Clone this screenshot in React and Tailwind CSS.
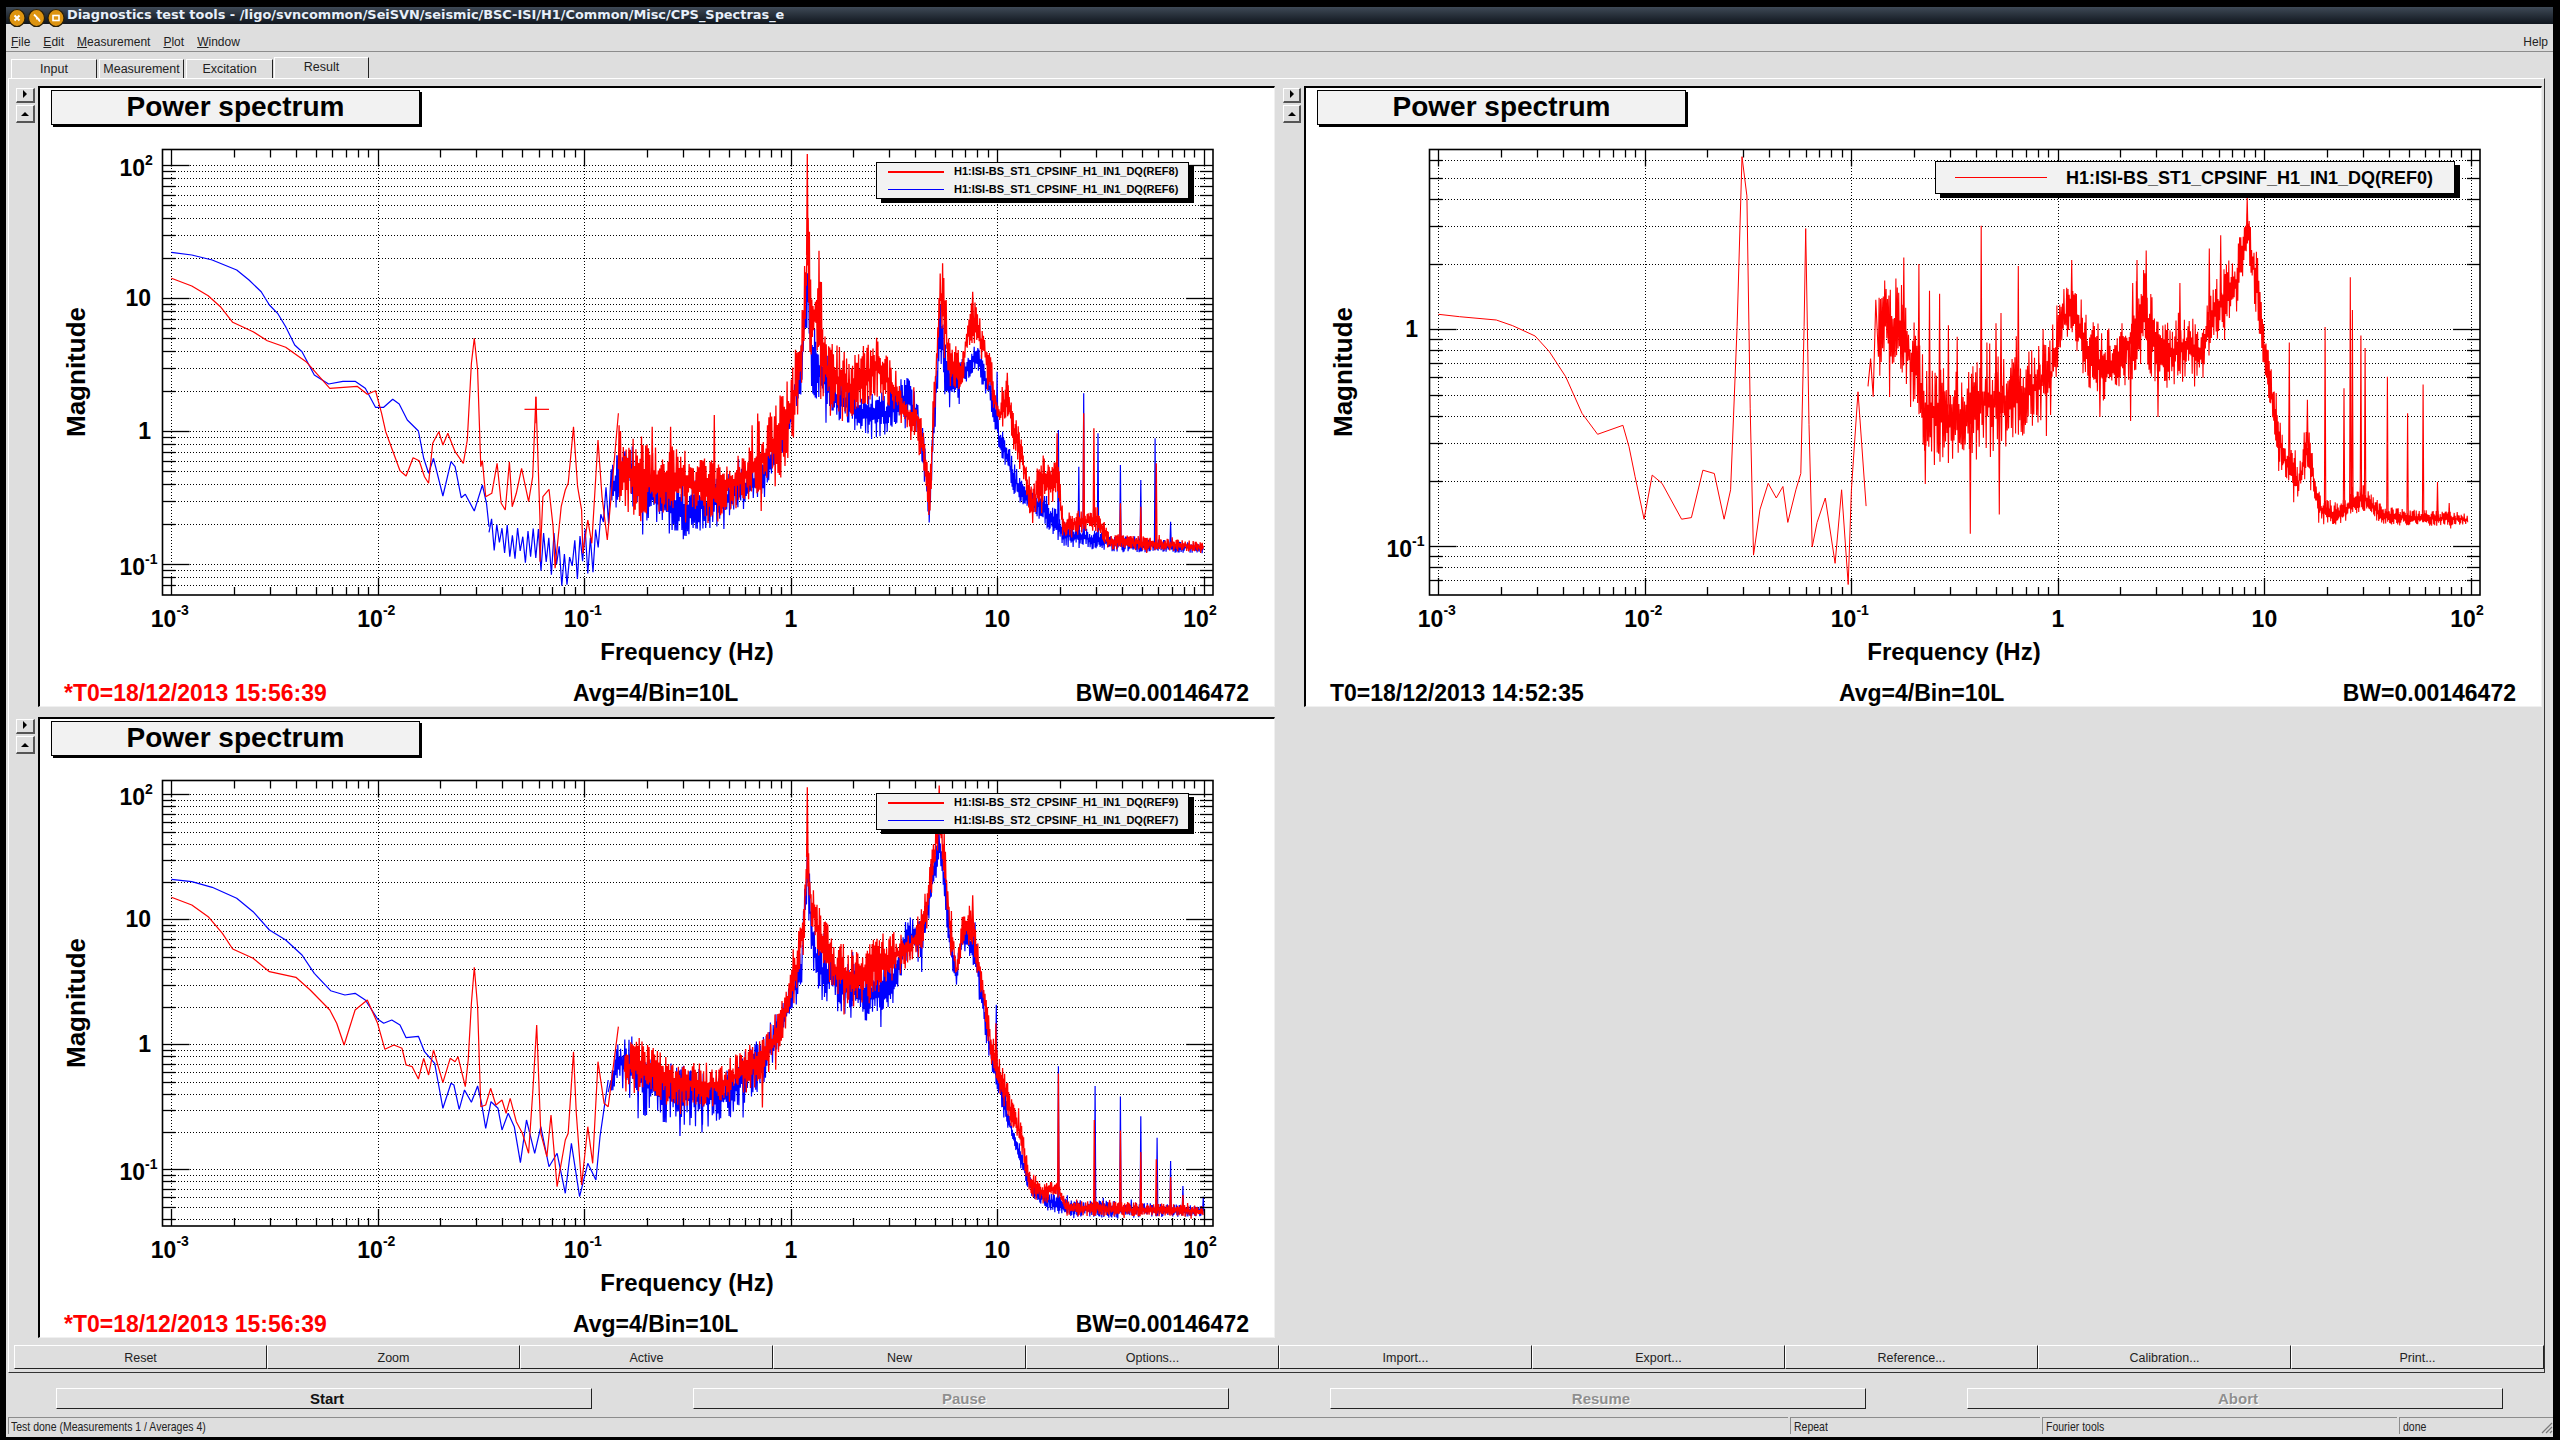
const RED = "#ff0000";
const BLUE = "#0000ff";

// zoom crop units -> page pixels
const conv = (ox, sx, oy, sy) => ([a, b]) => [ox + a / sx, oy + b / sy];
const z3 = conv(0, 2.45, 130, 3);
const z4 = conv(640, 2.45, 130, 3);
const z7 = conv(1280, 2.45, 80, 3);
const z8 = conv(1900, 2.376, 130, 2.613);
const z9 = conv(0, 2.45, 780, 3);
const z10 = conv(640, 2.45, 780, 2.795);
const main = conv(0, 0.6125, 0, 0.6125);

const trace = (pts, c) =>
  "M" + pts.map((p) => c(p).map((v) => v.toFixed(1)).join(" ")).join("L");

const makeRng = (s) => () => (s = (s * 16807) % 2147483647) / 2147483647;

// noisy spectrum: zig-zag between the top and bottom of an envelope, then spikes
const band = (env, c, seed, spikes = [], left = 0) => {
  const rnd = makeRng(seed);
  const rows = env.map(([d, t, b]) => {
    const [x, top] = c([d, t]);
    return [x, top, c([d, b])[1]];
  });
  const at = (x) => {
    let i = 0;
    while (i < rows.length - 2 && rows[i + 1][0] < x) i++;
    const [x0, t0, b0] = rows[i];
    const [x1, t1, b1] = rows[i + 1];
    const k = Math.min(1, Math.max(0, (x - x0) / (x1 - x0)));
    return [t0 + (t1 - t0) * k, b0 + (b1 - b0) * k];
  };
  let d = "";
  let x = rows[0][0];
  let sign = 1;
  const end = rows[rows.length - 1][0];
  while (x <= end) {
    const [t, b] = at(x);
    let mag = 0.08 + 0.92 * rnd();
    if (rnd() < 0.06) mag *= 1.5;
    const y = (t + b) / 2 + (sign * (b - t) * mag) / 2;
    d += (d ? "L" : "M") + x.toFixed(1) + " " + y.toFixed(1);
    sign = -sign;
    const rel = x - left;
    x += rel < 610 ? 2.6 : rel < 800 ? 0.7 : rel < 1000 ? 0.6 : 0.5;
  }
  spikes.forEach(([sx, sy]) => {
    const [px, py] = c([sx, sy]);
    const [t, b] = at(px);
    d += `M${(px - 0.7).toFixed(1)} ${((t + b) / 2).toFixed(1)}L${px.toFixed(1)} ${py.toFixed(1)}L${(px + 0.7).toFixed(1)} ${((t + b) / 2).toFixed(1)}`;
  });
  return d;
};

const chart1 = [
  {
    color: BLUE,
    width: 1.2,
    d: trace(
      [[420,367],[470,375],[520,390],[580,420],[610,450],[640,485],[660,525],[680,550],[700,590],[722,645],[740,665],[770,735],[805,762],[840,754],[870,754],[895,775],[920,832],[940,832],[962,808],[978,822],[998,870],[1025,903],[1038,985],[1050,1030],[1062,985],[1085,1098],[1105,995],[1115,1010],[1130,1103],[1140,1093],[1162,1143],[1182,1065],[1192,1120],[1198,1190]],
      z3
    ),
  },
  {
    color: BLUE,
    width: 1.2,
    d: band(
      [[-370,1140,1260],[-340,1180,1280],[-268,1170,1320],[-173,1230,1380],[-138,1200,1330],[-108,1180,1340],[-88,1060,1200],[-58,950,1150],[-28,930,1050],[0,990,1180],[50,1050,1180],[100,1050,1230],[200,1040,1190],[300,980,1090],[350,870,970],[395,650,800],[410,330,580],[420,550,800],[440,620,810],[480,720,880],[560,790,930],[600,780,920],[655,730,880],[680,800,900],[700,950,1100],[710,1050,1200],[725,700,850],[735,510,700],[760,700,850],[800,680,760],[825,640,720],[860,740,840],[880,880,960],[920,1000,1110],[940,1060,1130],[1000,1100,1200],[1040,1170,1250],[1150,1215,1265],[1380,1240,1270]],
      z4, 4711,
      [[1025,900],[875,725],[1177,1005],[1227,1050],[1262,925],[1122,910],[1075,1010],[1087,790],[1300,1175]]
    ),
  },
  {
    color: RED,
    width: 1.2,
    d: trace(
      [[420,445],[470,468],[510,497],[540,530],[570,577],[620,605],[655,632],[700,652],[750,695],[808,775],[875,769],[900,793],[920,782],[935,850],[945,905],[980,1022],[995,1038],[1012,983],[1027,992],[1040,1040],[1050,1060],[1060,940],[1075,905],[1085,945],[1097,910],[1115,965],[1135,1000],[1145,930],[1155,700],[1162,625],[1170,720],[1178,1010],[1182,992],[1190,1100],[1205,1090],[1218,1000],[1228,1120],[1238,1140],[1248,995],[1255,1130],[1265,1090],[1278,1015],[1295,1115],[1305,1040],[1313,800],[1323,1170],[1323,1295],[1330,1100],[1345,1078],[1355,1190],[1360,1315],[1375,1130],[1385,1080],[1392,1060],[1405,890],[1415,1070],[1425,1140],[1428,1270],[1440,1170],[1450,1240],[1465,930],[1475,1100],[1488,1230],[1515,850]],
      z3
    ),
  },
  {
    color: RED,
    width: 1.2,
    d: "M" + z3([1285, 838]).join(" ") + "L" + z3([1345, 838]).join(" "),
  },
  {
    color: RED,
    width: 1.3,
    d: band(
      [[-53,880,1120],[0,940,1180],[100,950,1150],[180,990,1190],[250,960,1130],[300,880,1100],[350,750,1050],[372,700,950],[395,560,800],[410,250,500],[420,360,800],[435,380,700],[450,600,830],[480,620,870],[520,680,880],[575,610,800],[620,700,840],[650,800,900],[680,800,930],[700,950,1060],[710,1030,1190],[718,800,1000],[725,650,780],[735,385,560],[745,430,700],[760,650,780],[790,650,780],[800,580,680],[815,490,640],[840,590,700],[860,680,800],[880,830,900],[900,730,880],[915,830,960],[940,950,1060],[960,1080,1190],[980,960,1130],[1000,1000,1130],[1025,990,1100],[1035,1150,1220],[1120,1130,1210],[1150,1210,1260],[1380,1235,1265]],
      z4, 9137,
      [[410,72],[182,855],[75,890],[30,890],[815,485],[900,728],[1087,850],[1112,895],[1177,1120],[1227,1130],[1265,1000],[1022,910]]
    ),
  },
];

const chart2 = [
  {
    color: RED,
    width: 1,
    d:
      trace(
        [[388,703],[440,710],[530,720],[570,737],[625,768],[660,815],[700,890],[740,1000],[778,1063],[840,1036],[855,1100],[870,1190]],
        z7
      ) +
      "L" +
      trace(
        [[1007,318],[1012,291],[1018,296],[1030,318],[1036,317],[1043,288],[1050,290],[1056,318],[1060,300],[1064,200],[1067,96],[1070,120],[1072,250],[1074,340],[1078,312],[1083,296],[1088,305],[1092,298],[1095,320],[1100,300],[1103,290],[1105,200],[1106,140],[1108,260],[1110,335],[1113,320],[1118,305],[1124,345],[1128,300],[1132,358],[1134,300],[1138,240],[1143,310]],
        main
      ).slice(1),
  },
  {
    color: RED,
    width: 1.1,
    d: band(
      [[-76,478,828],[-40,348,635],[0,400,640],[40,480,780],[60,620,850],[100,620,880],[150,660,860],[200,530,880],[250,580,830],[300,580,800],[360,540,740],[380,420,600],[410,360,580],[440,480,660],[480,520,720],[520,510,700],[580,360,620],[620,510,690],[680,460,660],[720,510,660],[740,390,580],[770,360,520],[800,310,480],[825,200,320],[850,330,520],[870,530,670],[885,630,770],[910,780,920],[945,880,980],[970,770,890],[995,950,1030],[1040,975,1035],[1100,925,995],[1150,985,1035],[1350,1000,1035]],
      z8, 2291,
      [[825,175],[1010,515],[1070,385],[1075,470],[1095,537],[1105,570],[1158,645],[1206,740],[1243,665],[1277,920],[1305,975],[925,555],[968,705],[1055,675],[193,250],[281,355],[167,1055],[236,1005],[60,925],[9,333],[45,350],[70,420],[94,428],[115,510],[136,540],[228,505],[240,478],[340,520],[408,340],[585,315],[563,340],[553,400],[665,400],[735,310],[762,275],[475,750],[548,760],[613,750]],
      1267
    ),
  },
];

const chart3 = [
  {
    color: BLUE,
    width: 1.2,
    d: trace(
      [[420,298],[470,305],[520,322],[580,355],[620,395],[660,450],[700,480],[740,525],[770,580],[810,632],[845,645],[870,640],[895,660],[925,717],[940,730],[960,720],[980,735],[995,773],[1025,769],[1040,815],[1065,850],[1085,985],[1105,910],[1112,915],[1125,988],[1138,930],[1155,967],[1170,918],[1180,970],[1190,1045],[1203,965],[1220,985],[1230,1050],[1245,1000],[1260,1040],[1275,1148],[1290,1020],[1310,1120],[1325,1040],[1345,1160],[1365,1120],[1385,1240],[1400,1090],[1420,1250],[1440,1150],[1460,1200],[1470,1070],[1490,900]],
      z9
    ),
  },
  {
    color: BLUE,
    width: 1.2,
    d: band(
      [[-78,850,890],[-50,730,840],[-30,700,920],[50,790,960],[100,790,970],[200,810,970],[300,710,860],[360,600,690],[395,440,600],[410,170,350],[425,400,550],[445,440,620],[500,490,660],[560,530,680],[620,480,630],[655,380,510],[690,390,510],[733,130,230],[745,200,340],[760,400,500],[775,520,600],[790,400,470],[820,400,530],[845,620,720],[865,750,830],[890,860,940],[915,970,1020],[935,1030,1100],[965,1130,1180],[1000,1150,1200],[1045,1170,1225],[1380,1190,1220]],
      z10, 7331,
      [[1025,800],[1115,855],[1177,885],[1227,940],[1267,1000],[1300,1065],[1330,1135],[1380,1165],[873,628],[98,995],[152,985]]
    ),
  },
  {
    color: RED,
    width: 1.2,
    d: trace(
      [[420,352],[470,375],[510,410],[545,460],[570,507],[620,535],[660,575],[725,592],[760,630],[808,690],[825,730],[843,795],[870,690],[900,660],[925,730],[943,808],[965,795],[985,805],[995,855],[1010,860],[1025,897],[1038,835],[1050,885],[1062,810],[1085,908],[1103,835],[1115,845],[1122,830],[1140,920],[1147,840],[1155,670],[1162,562],[1170,680],[1178,980],[1190,975],[1202,925],[1215,975],[1230,960],[1240,1000],[1250,955],[1265,1025],[1280,1060],[1295,1120],[1305,940],[1315,735],[1325,1060],[1340,1130],[1350,1005],[1365,1220],[1385,1080],[1392,1060],[1405,815],[1412,1000],[1425,1215],[1440,1040],[1452,1150],[1465,845],[1480,970],[1490,980],[1515,740]],
      z9
    ),
  },
  {
    color: RED,
    width: 1.3,
    d: band(
      [[-38,720,890],[0,720,870],[50,760,900],[100,790,910],[200,790,920],[250,750,880],[300,720,850],[340,620,780],[360,580,680],[385,450,600],[400,330,500],[410,130,300],[420,270,420],[440,350,500],[480,440,620],[540,470,650],[600,420,580],[650,430,530],[690,360,490],[710,240,340],[733,60,180],[745,130,290],[760,330,470],[775,500,570],[790,360,480],[815,330,470],[840,540,640],[860,690,790],[885,790,890],[910,880,970],[935,950,1050],[955,1090,1160],[990,1130,1190],[1020,1110,1160],[1045,1170,1220],[1380,1190,1220]],
      z10, 6173,
      [[410,20],[733,15],[1025,820],[1113,950],[1177,980],[1227,1040],[1265,1060],[1300,1110],[1330,1160],[815,322],[872,680],[300,915]]
    ),
  },
];

const minorX = [2, 3, 4, 5, 6, 7, 8, 9];

const Chart = ({ ox, oy, vx, y0, dec, yLabels, curves, children }) => {
  const left = 162.5 + ox;
  const right = 1213 + ox;
  const top = 149.5 + oy;
  const bottom = 595 + oy;
  const xAt = (l) => 171.4 + ox + (l + 3) * 206.5;
  const hLines = [];
  for (let d = -3; d < 3; d++) {
    [1, ...minorX].forEach((k) => {
      const y = Math.round(y0 - dec * (d + Math.log10(k))) + 0.5;
      if (y > top + 1 && y < bottom - 1) hLines.push({ y, major: k === 1 });
    });
  }
  const vTicks = [];
  for (let d = -3; d <= 2; d++) {
    vTicks.push({ x: Math.round(xAt(d)) + 0.5, major: true, d });
    if (d < 2) {
      minorX.forEach((k) =>
        vTicks.push({ x: Math.round(xAt(d + Math.log10(k))) + 0.5, major: false })
      );
    }
  }

  return (
    <svg
      className="block"
      width="1234"
      height="555"
      viewBox={`${vx} ${125 + oy} 1234 555`}
    >
      {hLines.map((l) => (
        <line key={l.y} x1={left} x2={right} y1={l.y} y2={l.y} stroke="#000" strokeWidth="1" strokeDasharray="1 2" shapeRendering="crispEdges" />
      ))}
      {vTicks.filter((t) => t.major).map((t) => (
        <line key={t.x} x1={t.x} x2={t.x} y1={top} y2={bottom} stroke="#000" strokeWidth="1" strokeDasharray="1 2" shapeRendering="crispEdges" />
      ))}
      {curves.map((c, i) => (
        <path key={i} d={c.d} fill="none" stroke={c.color} strokeWidth={c.width} strokeLinejoin="bevel" />
      ))}
      {children}
      {hLines.map((l) => (
        <g key={l.y} stroke="#000" strokeWidth="1.3">
          <line x1={left} x2={left + (l.major ? 27 : 13)} y1={l.y} y2={l.y} />
          <line x1={right - (l.major ? 27 : 13)} x2={right} y1={l.y} y2={l.y} />
        </g>
      ))}
      {vTicks.map((t) => (
        <g key={t.x} stroke="#000" strokeWidth="1.3">
          <line x1={t.x} x2={t.x} y1={top} y2={top + (t.major ? 17 : 8)} />
          <line x1={t.x} x2={t.x} y1={bottom - (t.major ? 17 : 8)} y2={bottom} />
        </g>
      ))}
      <rect x={left} y={top} width={right - left} height={bottom - top} fill="none" stroke="#000" strokeWidth="1.6" />

      {yLabels.map((l) => (
        <g key={l.log} className="font-bold">
          {l.sup ? (
            <>
              <text x={145 + ox} y={y0 - dec * l.log + 11} textAnchor="end" fontSize="23">10</text>
              <text x={145 + ox} y={y0 - dec * l.log + 0} fontSize="14">{l.sup}</text>
            </>
          ) : (
            <text x={151 + ox} y={y0 - dec * l.log + 8} textAnchor="end" fontSize="23">{l.text}</text>
          )}
        </g>
      ))}
      <g className="font-bold">
        {[-3, -2, -1, 2].map((d) => (
          <g key={d}>
            <text x={xAt(d) + 5} y={627 + oy} textAnchor="end" fontSize="23">10</text>
            <text x={xAt(d) + 5} y={615 + oy} fontSize="14">{d}</text>
          </g>
        ))}
        <text x={xAt(0)} y={627 + oy} textAnchor="middle" fontSize="23">1</text>
        <text x={xAt(1)} y={627 + oy} textAnchor="middle" fontSize="23">10</text>
        <text x={687 + ox} y={660 + oy} textAnchor="middle" fontSize="24">Frequency (Hz)</text>
        <text transform={`translate(${85 + ox} ${372 + oy}) rotate(-90)`} textAnchor="middle" fontSize="26">Magnitude</text>
      </g>
    </svg>
  );
};

const LegendRow = ({ color, children }) => (
  <div className="flex items-center pl-[11px] gap-[10px]">
    <span className="w-[56px] h-[1.5px]" style={{ background: color }} />
    <span>{children}</span>
  </div>
);

const SmallLegend = ({ a, b }) => (
  <div className="absolute left-[836px] top-[74px] w-[313px] h-[37px] flex flex-col justify-around border border-black bg-[#f2f2f2] shadow-[5px_4px_0_#000] text-[11px] font-bold leading-none">
    <LegendRow color={RED}>{a}</LegendRow>
    <LegendRow color={BLUE}>{b}</LegendRow>
  </div>
);

const ArrowBtn = ({ up }) => (
  <div
    className={`flex items-center justify-center border-t border-l border-white border-r-2 border-b-2 border-r-[#555] border-b-[#555] bg-[#dedede] ${up ? "h-[18px]" : "h-[15px] pb-[3px]"}`}
  >
    <svg width="8" height="8" viewBox="0 0 8 8">
      <path d={up ? "M0 6L4 2L8 6Z" : "M2 0L6 4L2 8Z"} fill="#000" />
    </svg>
  </div>
);

const Pad = ({ wide, gutter, title, t0, red, children }) => (
  <div className="flex">
    <div className={`w-[29px] pt-[2px] flex flex-col gap-[2px] ${gutter}`}>
      <ArrowBtn />
      <ArrowBtn up />
    </div>
    <div
      className={`relative h-[621px] bg-white border-t-2 border-l-2 border-t-black border-l-black border-r border-b border-r-[#f0f0f0] border-b-[#f0f0f0] ${wide ? "w-[1238px]" : "w-[1237px]"}`}
    >
      <div className="ml-[11px] mt-[2px] w-[369px] h-[35px] pb-[2px] flex items-center justify-center border border-black bg-[#f2f2f2] shadow-[2px_2px_0_#000] text-[28px] font-bold leading-none">
        {title}
      </div>
      {children}
      <div className="flex items-center h-[26px] pl-[24px] pr-[25px] text-[23px] font-bold leading-none">
        <span className={`w-[509px] ${red ? "text-[#ff0000]" : ""}`}>{t0}</span>
        <span className="flex-1">Avg=4/Bin=10L</span>
        <span>BW=0.00146472</span>
      </div>
    </div>
  </div>
);

const yLabels1 = [
  { log: 2, sup: "2" },
  { log: 1, text: "10" },
  { log: 0, text: "1" },
  { log: -1, sup: "-1" },
];

const raised = "border-t border-l border-t-white border-l-white border-r border-b border-r-[#222] border-b-[#222]";

const tabs = [
  { label: "Input", cls: "w-[86px] mr-[2px] h-[19px]" },
  { label: "Measurement", cls: "w-[85px] mr-[2px] h-[19px]" },
  { label: "Excitation", cls: "w-[87px] mr-[1px] h-[19px]" },
  { label: "Result", cls: "w-[95px] h-[21px] pb-[1px]" },
];

const menus = [
  ["F", "ile"],
  ["E", "dit"],
  ["M", "easurement"],
  ["P", "lot"],
  ["W", "indow"],
];

const actions = ["Reset", "Zoom", "Active", "New", "Options...", "Import...", "Export...", "Reference...", "Calibration...", "Print..."];

export default function App() {
  return (
    <div className="w-[2560px] h-[1440px] overflow-hidden bg-black pt-[7px] pb-[3px] pl-[6px] pr-[7px] font-['Liberation_Sans','Arial',sans-serif] text-black">
      <div className="h-full flex flex-col bg-[#dedede]">
        <div className="h-[17px] shrink-0 flex items-center pl-[5px] bg-linear-to-b from-[#3f4a57] to-[#10161e] font-['DejaVu_Sans',sans-serif] font-bold text-[12.9px] leading-none text-[#e8f0fa]">
          <svg className="overflow-visible" width="56" height="17" viewBox="0 0 56 17">
            {[6, 25.5, 45].map((cx) => (
              <ellipse key={cx} cx={cx} cy="11" rx="8" ry="8.5" fill="#dd9410" stroke="#2a1f08" strokeWidth="1.2" />
            ))}
            <path d="M3.5 8.5L8.5 13.5M8.5 8.5L3.5 13.5" stroke="#fff" strokeWidth="2" />
            <path d="M23 7.5L27 11.5L25 11.5M26 10.5L29 14.5" stroke="#fff" strokeWidth="1.8" fill="none" />
            <rect x="42" y="8.5" width="6" height="5" fill="none" stroke="#fff" strokeWidth="1.6" />
          </svg>
          <span>Diagnostics test tools - /ligo/svncommon/SeiSVN/seismic/BSC-ISI/H1/Common/Misc/CPS_Spectras_e</span>
        </div>

        <div className="h-[28px] shrink-0 flex items-center justify-between pt-[9px] pl-[5px] pr-[5px] border-b border-[#8c8c8c] text-[12px] leading-none text-[#222]">
          <div className="flex gap-[13px]">
            {menus.map(([k, rest]) => (
              <span key={k}>
                <span className="underline">{k}</span>
                {rest}
              </span>
            ))}
          </div>
          <span>Help</span>
        </div>

        <div className="h-[26px] shrink-0 flex items-end pl-[5px] text-[12.5px] leading-none text-[#222]">
          {tabs.map((t) => (
            <div
              key={t.label}
              className={`flex items-center justify-center border-t border-l border-r border-t-white border-l-white border-r-[#222] ${t.cls}`}
            >
              {t.label}
            </div>
          ))}
        </div>

        <div className="ml-[2px] w-[2537px] h-[1295px] shrink-0 border border-t-white border-l-white border-r-[#333] border-b-[#333] pt-[7px]">
          <div className="grid grid-cols-[1266px_1269px] grid-rows-[621px_621px] gap-y-[10px]">
            <Pad gutter="pl-[7px] pr-[3px]" title="Power spectrum" t0="*T0=18/12/2013 15:56:39" red>
              <Chart ox={0} oy={0} vx={40} y0={431.3} dec={133} yLabels={yLabels1} curves={chart1}>
                <path d={"M" + z3([1313, 800]).join(" ") + "L" + z3([1313, 880]).join(" ")} stroke={RED} strokeWidth="1.2" />
              </Chart>
              <SmallLegend a="H1:ISI-BS_ST1_CPSINF_H1_IN1_DQ(REF8)" b="H1:ISI-BS_ST1_CPSINF_H1_IN1_DQ(REF6)" />
            </Pad>

            <Pad wide gutter="pl-[8px] pr-[3px]" title="Power spectrum" t0="T0=18/12/2013 14:52:35">
              <Chart
                ox={1267}
                oy={0}
                vx={1306}
                y0={329.3}
                dec={217}
                yLabels={[
                  { log: 0, text: "1" },
                  { log: -1, sup: "-1" },
                ]}
                curves={chart2}
              />
              <div className="absolute left-[629px] top-[73px] w-[520px] h-[33px] flex items-center pl-[19px] gap-[19px] border border-black bg-[#f2f2f2] shadow-[5px_4px_0_#000] text-[18px] font-bold leading-none">
                <span className="w-[92px] h-px bg-[#ff0000]" />
                <span>H1:ISI-BS_ST1_CPSINF_H1_IN1_DQ(REF0)</span>
              </div>
            </Pad>

            <Pad gutter="pl-[7px] pr-[3px]" title="Power spectrum" t0="*T0=18/12/2013 15:56:39" red>
              <Chart ox={0} oy={631} vx={40} y0={1044.3} dec={125} yLabels={yLabels1} curves={chart3} />
              <SmallLegend a="H1:ISI-BS_ST2_CPSINF_H1_IN1_DQ(REF9)" b="H1:ISI-BS_ST2_CPSINF_H1_IN1_DQ(REF7)" />
            </Pad>
          </div>

          <div className="mt-[7px] ml-[5px] w-[2530px] h-[24px] grid grid-cols-10 text-[12.5px] leading-none text-[#222]">
            {actions.map((a) => (
              <div key={a} className={`flex items-center justify-center pt-[2px] ${raised}`}>
                {a}
              </div>
            ))}
          </div>
        </div>

        <div className="h-[44px] shrink-0 pt-[15px] pl-[50px] flex gap-[101px] text-[15px] leading-none">
          {["Start", "Pause", "Resume", "Abort"].map((b) => (
            <div
              key={b}
              className={`w-[536px] h-[21px] pl-[6px] flex items-center justify-center font-bold ${raised} ${b === "Start" ? "text-[#111]" : "text-[#8f8f8f] [text-shadow:1px_1px_0_#fff]"}`}
            >
              {b}
            </div>
          ))}
        </div>

        <div className="h-[19px] shrink-0 flex pl-[2px] pb-[2px] gap-[2px] text-[10.5px] leading-none text-[#222]">
          {[
            ["Test done (Measurements 1 / Averages 4)", "w-[1780px] pl-[2px]"],
            ["Repeat", "w-[250px] pl-[3px]"],
            ["Fourier tools", "w-[355px] pl-[3px]"],
            ["done", "flex-1 pl-[3px]"],
          ].map(([t, w]) => (
            <div key={t} className={`relative flex items-center border-t border-l border-t-[#8c8c8c] border-l-[#8c8c8c] ${w}`}>
              <span className="inline-block scale-y-125">{t}</span>
              {t === "done" && (
                <svg className="absolute right-0 bottom-0" width="12" height="12" viewBox="0 0 12 12">
                  <path d="M11 1L1 11M11 5L5 11M11 9L9 11" stroke="#7a7a7a" strokeWidth="1.2" />
                </svg>
              )}
            </div>
          ))}
        </div>
      </div>
    </div>
  );
}
